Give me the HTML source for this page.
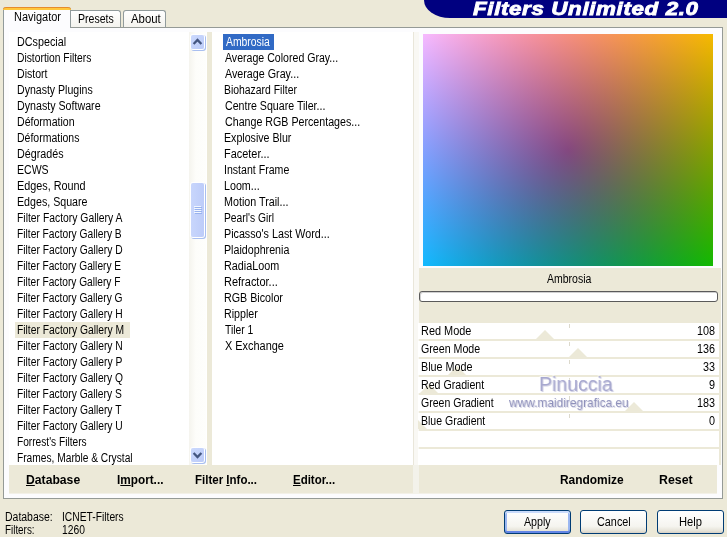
<!DOCTYPE html>
<html><head><meta charset="utf-8"><title>Filters Unlimited 2.0</title>
<style>
html,body{margin:0;padding:0;}
body{width:727px;height:537px;overflow:hidden;background:#ece9d8;position:relative;font-family:"Liberation Sans",sans-serif;font-size:12px;color:#000;}
.abs{position:absolute;}
.t{position:absolute;white-space:nowrap;transform-origin:0 0;}
#tx{position:absolute;left:0;top:0;width:727px;height:537px;will-change:transform;}
.t u{text-decoration-thickness:1px;text-underline-offset:1px;}
.pane{left:3px;top:27px;width:720px;height:472px;background:#fcfcfe;border:1px solid #959a96;box-sizing:border-box;}
.tab{box-sizing:border-box;border:1px solid #919b9c;border-bottom:none;border-radius:3px 3px 0 0;background:linear-gradient(#ffffff,#f4f3ee);}
.tabsel{background:#fcfcfe;border-top:none;}
.tabsel:before{content:"";position:absolute;left:-1px;right:-1px;top:0;height:2px;background:#ffc73c;border-top:1px solid #e68b2c;border-radius:3px 3px 0 0;}
.btn{box-sizing:border-box;height:24px;width:67px;top:510px;border:1px solid #003c74;border-radius:3px;background:linear-gradient(#ffffff 0%,#f5f4ef 70%,#e6e3d8 90%,#d6d0c5 100%);}
.row{left:418px;width:301px;height:16px;background:#fff;overflow:hidden;}
.row i{position:absolute;left:151px;top:1px;width:1px;height:4px;background:#dcd9cc;}
.tri{position:absolute;width:0;height:0;border-left:9px solid transparent;border-right:9px solid transparent;border-bottom:9px solid #ece9d8;bottom:0;}
.sb{border-radius:2px;background:linear-gradient(135deg,#cbd9fd,#bccbf8);width:13px;box-shadow:0 0 0 1px #fff,1px 1px 0 1px #a9bff0;}
</style></head><body>

<div class="abs" style="left:424px;top:0;width:303px;height:18px;background:#000080;border-bottom-left-radius:26px 18px;"></div>
<div class="abs" id="title" style="left:473px;top:-2px;will-change:transform;white-space:nowrap;font-weight:bold;font-style:italic;font-size:18px;line-height:22px;color:#fff;letter-spacing:0.5px;-webkit-text-stroke:0.8px #fff;transform-origin:0 0;transform:scaleX(1.243);">Filters Unlimited 2.0</div>
<div class="abs pane"></div>
<div class="abs tab tabsel" style="left:3px;top:7px;width:68px;height:21px;"></div>
<div class="abs tab" style="left:71px;top:10px;width:50px;height:17px;border-left:none;border-top-left-radius:0;"></div>
<div class="abs tab" style="left:123px;top:10px;width:43px;height:17px;"></div>
<div class="abs" style="left:9px;top:32px;width:712px;height:433px;background:#ece9d8;"></div>
<div class="abs" style="left:9px;top:465px;width:708px;height:29px;background:linear-gradient(#ece9d8 0,#ece9d8 28px,#f3f1e8 28px);"></div>
<div class="abs" style="left:9px;top:32px;width:198px;height:433px;background:#fff;"></div>
<div class="abs" style="left:15px;top:322px;width:115px;height:16px;background:#ece9d8;"></div>
<div class="abs" style="left:189px;top:32px;width:17px;height:433px;background:linear-gradient(90deg,#f5f4ee,#fdfdfa 40%,#fefefc);"></div>
<div class="abs sb" style="left:191px;top:35px;height:14px;"><svg width="14" height="14" viewBox="0 0 14 14" style="position:absolute;left:0;top:0"><path d="M2.6 9 L6.5 5 L10.4 9" fill="none" stroke="#445680" stroke-width="2.3"/></svg></div>
<div class="abs sb" style="left:191px;top:448px;height:14px;"><svg width="14" height="14" viewBox="0 0 14 14" style="position:absolute;left:0;top:0"><path d="M2.6 5 L6.5 9 L10.4 5" fill="none" stroke="#445680" stroke-width="2.3"/></svg></div>
<div class="abs sb" style="left:191px;top:183px;height:54px;background:linear-gradient(90deg,#c8d6fc,#bdccf9);"><div style="position:absolute;left:3px;top:23px;width:7px;height:1px;background:#f2f6ff;box-shadow:0 2px 0 #f2f6ff,0 4px 0 #f2f6ff,0 6px 0 #f2f6ff,1px 1px 0 #98b2ee,1px 3px 0 #98b2ee,1px 5px 0 #98b2ee,1px 7px 0 #98b2ee;"></div></div>
<div class="abs" style="left:212px;top:32px;width:201px;height:433px;background:#fff;"></div>
<div class="abs" style="left:223px;top:34px;width:51px;height:16px;background:#316ac5;"></div>
<div class="abs" style="left:413px;top:32px;width:6px;height:433px;background:#f9f8f4;border-left:1px solid #e9e6da;box-sizing:border-box;"></div>
<div class="abs" style="left:413px;top:465px;width:6px;height:29px;background:#f3f2ea;"></div>
<div class="abs" style="left:419px;top:28px;width:302px;height:240px;background:#fcfcfe;"></div>
<div class="abs" style="left:423px;top:34px;width:290px;height:232px;background:radial-gradient(circle 186px at 50% 50%,rgb(0,72,0),rgb(0,186,0)),linear-gradient(90deg,rgb(0,0,255),rgb(0,0,0)),linear-gradient(180deg,rgb(246,0,0),rgb(18,0,0));background-blend-mode:screen;"></div>
<div class="abs" style="left:419px;top:291px;width:299px;height:11px;box-sizing:border-box;border:1px solid #5a5a5a;border-radius:3px;background:#fff;box-shadow:inset 1px 1px 0 #d0d0d0;"></div>
<div class="abs row" style="top:323px;"><i></i><div class="tri" style="left:118px;"></div></div>
<div class="abs row" style="top:341px;"><i></i><div class="tri" style="left:151px;"></div></div>
<div class="abs row" style="top:359px;"><i></i><div class="tri" style="left:30px;"></div></div>
<div class="abs row" style="top:377px;"><i></i><div class="tri" style="left:2px;"></div></div>
<div class="abs row" style="top:395px;"><i></i><div class="tri" style="left:207px;"></div></div>
<div class="abs row" style="top:413px;"><i></i><div class="tri" style="left:-9px;"></div></div>
<div class="abs row" style="top:431px;"></div>
<div class="abs row" style="top:449px;"></div>
<div class="abs" id="wm1" style="left:538.5px;top:370.5px;font-size:20px;line-height:26px;color:#a7a8cf;text-shadow:1px 1px 0 rgba(130,130,180,.35),-1px -1px 0 rgba(255,255,255,.6);white-space:nowrap;transform-origin:0 0;transform:scaleX(0.975);will-change:transform;">Pinuccia</div>
<div class="abs" id="wm2" style="left:509px;top:395px;font-size:13px;line-height:16px;color:#8f91bb;text-shadow:1px 1px 0 rgba(130,130,180,.3);white-space:nowrap;transform-origin:0 0;transform:scaleX(0.915);will-change:transform;">www.maidiregrafica.eu</div>
<div class="abs btn" style="left:504px;box-shadow:inset 0 2px 0 #cadbfb,inset 0 -2px 0 #6486e6,inset 2px 0 0 #9bb7f1,inset -2px 0 0 #9bb7f1;"></div>
<div class="abs btn" style="left:580px;"></div>
<div class="abs btn" style="left:657px;"></div>
<div id="tx">
<div class="t" id="t0" style="left:16.74px;top:34.84px;line-height:14px;transform:scaleX(0.8965);">DCspecial</div>
<div class="t" id="t1" style="left:16.78px;top:50.84px;line-height:14px;transform:scaleX(0.8580);">Distortion Filters</div>
<div class="t" id="t2" style="left:16.76px;top:66.84px;line-height:14px;transform:scaleX(0.8799);">Distort</div>
<div class="t" id="t3" style="left:16.76px;top:82.84px;line-height:14px;transform:scaleX(0.8799);">Dynasty Plugins</div>
<div class="t" id="t4" style="left:16.75px;top:98.84px;line-height:14px;transform:scaleX(0.8891);">Dynasty Software</div>
<div class="t" id="t5" style="left:16.75px;top:114.84px;line-height:14px;transform:scaleX(0.8812);">Déformation</div>
<div class="t" id="t6" style="left:16.76px;top:130.84px;line-height:14px;transform:scaleX(0.8743);">Déformations</div>
<div class="t" id="t7" style="left:16.74px;top:146.84px;line-height:14px;transform:scaleX(0.8942);">Dégradés</div>
<div class="t" id="t8" style="left:16.76px;top:162.84px;line-height:14px;transform:scaleX(0.8780);">ECWS</div>
<div class="t" id="t9" style="left:16.73px;top:178.84px;line-height:14px;transform:scaleX(0.9024);">Edges, Round</div>
<div class="t" id="t10" style="left:16.75px;top:194.84px;line-height:14px;transform:scaleX(0.8883);">Edges, Square</div>
<div class="t" id="t11" style="left:16.77px;top:210.84px;line-height:14px;transform:scaleX(0.8636);">Filter Factory Gallery A</div>
<div class="t" id="t12" style="left:16.78px;top:226.84px;line-height:14px;transform:scaleX(0.8531);">Filter Factory Gallery B</div>
<div class="t" id="t13" style="left:16.78px;top:242.84px;line-height:14px;transform:scaleX(0.8559);">Filter Factory Gallery D</div>
<div class="t" id="t14" style="left:16.79px;top:258.84px;line-height:14px;transform:scaleX(0.8490);">Filter Factory Gallery E</div>
<div class="t" id="t15" style="left:16.79px;top:274.84px;line-height:14px;transform:scaleX(0.8480);">Filter Factory Gallery F</div>
<div class="t" id="t16" style="left:16.78px;top:290.84px;line-height:14px;transform:scaleX(0.8512);">Filter Factory Gallery G</div>
<div class="t" id="t17" style="left:16.78px;top:306.84px;line-height:14px;transform:scaleX(0.8559);">Filter Factory Gallery H</div>
<div class="t" id="t18" style="left:16.78px;top:322.84px;line-height:14px;transform:scaleX(0.8588);">Filter Factory Gallery M</div>
<div class="t" id="t19" style="left:16.78px;top:338.84px;line-height:14px;transform:scaleX(0.8575);">Filter Factory Gallery N</div>
<div class="t" id="t20" style="left:16.78px;top:354.84px;line-height:14px;transform:scaleX(0.8580);">Filter Factory Gallery P</div>
<div class="t" id="t21" style="left:16.78px;top:370.84px;line-height:14px;transform:scaleX(0.8544);">Filter Factory Gallery Q</div>
<div class="t" id="t22" style="left:16.78px;top:386.84px;line-height:14px;transform:scaleX(0.8539);">Filter Factory Gallery S</div>
<div class="t" id="t23" style="left:16.78px;top:402.84px;line-height:14px;transform:scaleX(0.8577);">Filter Factory Gallery T</div>
<div class="t" id="t24" style="left:16.78px;top:418.84px;line-height:14px;transform:scaleX(0.8575);">Filter Factory Gallery U</div>
<div class="t" id="t25" style="left:16.79px;top:434.84px;line-height:14px;transform:scaleX(0.8465);">Forrest's Filters</div>
<div class="t" id="t26" style="left:16.78px;top:450.84px;line-height:14px;transform:scaleX(0.8496);">Frames, Marble &amp; Crystal</div>
<div class="t" id="t27" style="left:225.70px;top:34.84px;line-height:14px;transform:scaleX(0.8639);color:#fff;">Ambrosia</div>
<div class="t" id="t28" style="left:225.00px;top:50.84px;line-height:14px;transform:scaleX(0.8824);">Average Colored Gray...</div>
<div class="t" id="t29" style="left:225.00px;top:66.84px;line-height:14px;transform:scaleX(0.8938);">Average Gray...</div>
<div class="t" id="t30" style="left:224.17px;top:82.84px;line-height:14px;transform:scaleX(0.8673);">Biohazard Filter</div>
<div class="t" id="t31" style="left:224.79px;top:98.84px;line-height:14px;transform:scaleX(0.8856);">Centre Square Tiler...</div>
<div class="t" id="t32" style="left:224.79px;top:114.84px;line-height:14px;transform:scaleX(0.8891);">Change RGB Percentages...</div>
<div class="t" id="t33" style="left:224.15px;top:130.84px;line-height:14px;transform:scaleX(0.8867);">Explosive Blur</div>
<div class="t" id="t34" style="left:224.13px;top:146.84px;line-height:14px;transform:scaleX(0.9104);">Faceter...</div>
<div class="t" id="t35" style="left:224.15px;top:162.84px;line-height:14px;transform:scaleX(0.8822);">Instant Frame</div>
<div class="t" id="t36" style="left:224.14px;top:178.84px;line-height:14px;transform:scaleX(0.8924);">Loom...</div>
<div class="t" id="t37" style="left:224.14px;top:194.84px;line-height:14px;transform:scaleX(0.8944);">Motion Trail...</div>
<div class="t" id="t38" style="left:224.18px;top:210.84px;line-height:14px;transform:scaleX(0.8571);">Pearl's Girl</div>
<div class="t" id="t39" style="left:224.14px;top:226.84px;line-height:14px;transform:scaleX(0.8942);">Picasso's Last Word...</div>
<div class="t" id="t40" style="left:224.15px;top:242.84px;line-height:14px;transform:scaleX(0.8901);">Plaidophrenia</div>
<div class="t" id="t41" style="left:224.14px;top:258.84px;line-height:14px;transform:scaleX(0.8999);">RadiaLoom</div>
<div class="t" id="t42" style="left:224.12px;top:274.84px;line-height:14px;transform:scaleX(0.9159);">Refractor...</div>
<div class="t" id="t43" style="left:224.14px;top:290.84px;line-height:14px;transform:scaleX(0.8924);">RGB Bicolor</div>
<div class="t" id="t44" style="left:224.15px;top:306.84px;line-height:14px;transform:scaleX(0.8897);">Rippler</div>
<div class="t" id="t45" style="left:224.79px;top:322.84px;line-height:14px;transform:scaleX(0.8627);">Tiler 1</div>
<div class="t" id="t46" style="left:224.89px;top:338.84px;line-height:14px;transform:scaleX(0.9108);">X Exchange</div>
<div class="t" id="t47" style="left:13.52px;top:9.84px;line-height:14px;transform:scaleX(0.9142);">Navigator</div>
<div class="t" id="t48" style="left:77.86px;top:11.84px;line-height:14px;transform:scaleX(0.8801);">Presets</div>
<div class="t" id="t49" style="left:130.70px;top:11.84px;line-height:14px;transform:scaleX(0.9469);">About</div>
<div class="t" id="t50" style="left:25.83px;top:472.84px;font-weight:bold;line-height:14px;transform:scaleX(1.0151);"><u>D</u>atabase</div>
<div class="t" id="t51" style="left:117.06px;top:472.84px;font-weight:bold;line-height:14px;transform:scaleX(0.9808);">I<u>m</u>port...</div>
<div class="t" id="t52" style="left:195.48px;top:472.84px;font-weight:bold;line-height:14px;transform:scaleX(0.9588);">Filter <u>I</u>nfo...</div>
<div class="t" id="t53" style="left:293.18px;top:472.84px;font-weight:bold;line-height:14px;transform:scaleX(0.9566);"><u>E</u>ditor...</div>
<div class="t" id="t54" style="left:559.65px;top:472.84px;font-weight:bold;line-height:14px;transform:scaleX(0.9943);">Randomize</div>
<div class="t" id="t55" style="left:658.71px;top:472.84px;font-weight:bold;line-height:14px;transform:scaleX(1.0278);">Reset</div>
<div class="t" id="t56" style="left:546.80px;top:271.84px;line-height:14px;transform:scaleX(0.8760);">Ambrosia</div>
<div class="t" id="t57" style="left:420.83px;top:323.84px;line-height:14px;transform:scaleX(0.9092);">Red Mode</div>
<div class="t" id="t58" style="left:697.33px;top:323.84px;line-height:14px;transform:scaleX(0.9000);">108</div>
<div class="t" id="t59" style="left:421.49px;top:341.84px;line-height:14px;transform:scaleX(0.8878);">Green Mode</div>
<div class="t" id="t60" style="left:697.33px;top:341.84px;line-height:14px;transform:scaleX(0.9000);">136</div>
<div class="t" id="t61" style="left:420.84px;top:359.84px;line-height:14px;transform:scaleX(0.8964);">Blue Mode</div>
<div class="t" id="t62" style="left:703.33px;top:359.84px;line-height:14px;transform:scaleX(0.9000);">33</div>
<div class="t" id="t63" style="left:420.85px;top:377.84px;line-height:14px;transform:scaleX(0.8857);">Red Gradient</div>
<div class="t" id="t64" style="left:709.33px;top:377.84px;line-height:14px;transform:scaleX(0.9000);">9</div>
<div class="t" id="t65" style="left:421.49px;top:395.84px;line-height:14px;transform:scaleX(0.8777);">Green Gradient</div>
<div class="t" id="t66" style="left:697.33px;top:395.84px;line-height:14px;transform:scaleX(0.9000);">183</div>
<div class="t" id="t67" style="left:420.86px;top:413.84px;line-height:14px;transform:scaleX(0.8762);">Blue Gradient</div>
<div class="t" id="t68" style="left:709.33px;top:413.84px;line-height:14px;transform:scaleX(0.9000);">0</div>
<div class="t" id="t69" style="left:4.96px;top:509.84px;line-height:14px;transform:scaleX(0.8720);">Database:</div>
<div class="t" id="t70" style="left:61.78px;top:509.84px;line-height:14px;transform:scaleX(0.8567);">ICNET-Filters</div>
<div class="t" id="t71" style="left:5.01px;top:522.84px;line-height:14px;transform:scaleX(0.8204);">Filters:</div>
<div class="t" id="t72" style="left:62.47px;top:522.84px;line-height:14px;transform:scaleX(0.8568);">1260</div>
<div class="t" id="t73" style="left:524.40px;top:514.84px;line-height:14px;transform:scaleX(0.8898);">Apply</div>
<div class="t" id="t74" style="left:597.48px;top:514.84px;line-height:14px;transform:scaleX(0.9031);">Cancel</div>
<div class="t" id="t75" style="left:678.61px;top:514.84px;line-height:14px;transform:scaleX(0.9305);">Help</div>
</div>
</body></html>
